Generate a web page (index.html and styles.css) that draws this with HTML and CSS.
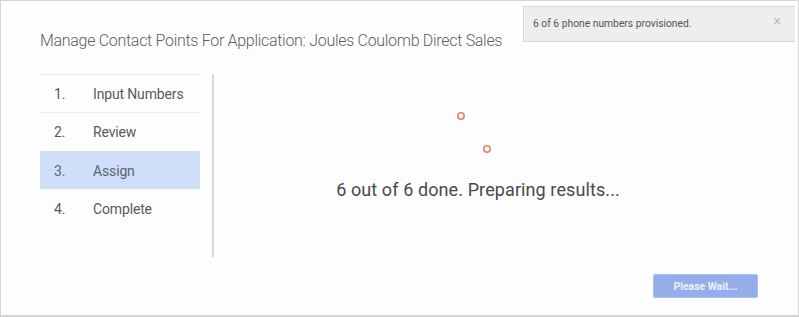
FILE: index.html
```html
<!DOCTYPE html>
<html>
<head>
<meta charset="utf-8">
<link rel="stylesheet" href="styles.css">
</head>
<body>
<div class="frame">
  <h1 class="title">Manage Contact Points For Application: Joules Coulomb Direct Sales</h1>
  <div class="content">
    <ol class="steps">
      <li class="step"><span class="num">1.</span><span class="label">Input Numbers</span></li>
      <li class="step"><span class="num">2.</span><span class="label">Review</span></li>
      <li class="step active"><span class="num">3.</span><span class="label">Assign</span></li>
      <li class="step last"><span class="num">4.</span><span class="label">Complete</span></li>
    </ol>
    <div class="divider"></div>
    <div class="main">
      <svg class="spinner" width="60" height="48" viewBox="0 0 60 48">
        <circle cx="13" cy="8" r="3.2" fill="none" stroke="#ec7f68" stroke-width="1.6"/>
        <circle cx="39" cy="41" r="3.2" fill="none" stroke="#ec7f68" stroke-width="1.6"/>
      </svg>
      <p class="status">6 out of 6 done. Preparing results...</p>
      <div class="bar"><div class="bar-fill"></div><div class="bar-end"></div></div>
    </div>
  </div>
  <div class="actions">
    <button class="btn">Please Wait...</button>
  </div>
  <div class="toast">
    <span class="toast-text">6 of 6 phone numbers provisioned.</span>
    <span class="toast-close">×</span>
  </div>
</div>
</body>
</html>
```

FILE: styles.css
```css
html, body {
  margin: 0;
  padding: 0;
  background: #ffffff;
}
body {
  font-family: Roboto, "Liberation Sans", Arial, sans-serif;
}
.frame {
  position: relative;
  width: 799px;
  height: 317px;
  box-sizing: border-box;
  border: 1px solid #d5d5d5;
  border-bottom-width: 2px;
  background: #fdfdfd;
  padding: 0 40px 0 39px;
}
.title {
  margin: 0;
  padding-top: 30px;
  font-size: 16px;
  line-height: 20px;
  font-weight: 300;
  color: #5e5e5e;
  letter-spacing: -0.3px;
}
.content {
  display: flex;
  margin-top: 23px;
  height: 183px;
}
.steps {
  list-style: none;
  margin: 0;
  padding: 0;
  width: 160px;
}
.step {
  display: flex;
  align-items: center;
  height: 38px;
  border-top: 1px solid #e7ecf2;
  box-sizing: border-box;
  font-size: 14px;
  letter-spacing: -0.15px;
  color: #5a5a5a;
}
.step.active {
  background: #cfdffa;
  border-top-color: #cfdffa;
  margin-top: 1px;
  color: #5d6470;
}
.step.active + .step {
  border-top-color: transparent;
}
.num {
  width: 39px;
  padding-left: 14px;
}
.divider {
  width: 2px;
  background: #d9d9d9;
  margin-left: 12px;
}
.main {
  flex: 1;
  display: flex;
  flex-direction: column;
  align-items: center;
  padding-right: 16px;
}
.spinner {
  display: block;
  margin-top: 34px;
}
.status {
  margin: 23px 0 0;
  font-size: 18px;
  line-height: 22px;
  letter-spacing: 0.1px;
  color: #474a4f;
}
.bar {
  display: flex;
  align-items: flex-end;
  margin-top: 34px;
  margin-left: 32px;
  width: 365px;
  height: 12px;
}
.bar-fill {
  flex: 1;
  height: 5px;
  background: #ffffff;
}
.bar-end {
  width: 12px;
  height: 12px;
  background: #ffffff;
}
.actions {
  display: flex;
  justify-content: flex-end;
  margin-top: 17px;
}
.btn {
  width: 105px;
  height: 24px;
  border: 1px solid #a9c0ef;
  border-radius: 2px;
  background: #93aee9;
  color: #eef2fb;
  font-family: Roboto, "Liberation Sans", Arial, sans-serif;
  font-size: 10.4px;
  font-weight: 700;
  padding: 0;
}
.toast {
  position: absolute;
  top: 5px;
  left: 522px;
  width: 272px;
  height: 36px;
  box-sizing: border-box;
  background: #eeeeee;
  border: 1px solid #d6d6d6;
  border-right: none;
  display: flex;
  align-items: center;
  justify-content: space-between;
  padding: 0 14px 2px 9px;
}
.toast-text {
  font-size: 10.3px;
  color: #555555;
}
.toast-close {
  font-size: 14px;
  color: #bbbbbb;
  margin-top: -4px;
}
```
